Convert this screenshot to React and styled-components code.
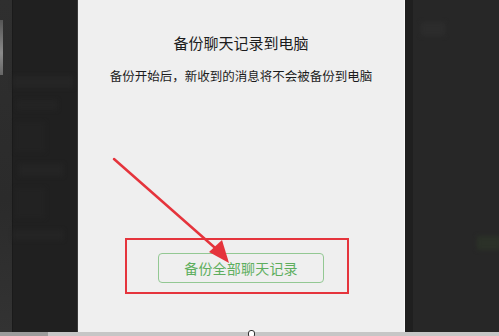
import React from "react";
import styled, { createGlobalStyle } from "styled-components";

const Global = createGlobalStyle`
  html, body { margin: 0; padding: 0; background: #262626; }
  body { font-family: "Noto Sans CJK SC", "Noto Sans", sans-serif; }
`;

const Screen = styled.div`
  position: relative;
  width: 499px;
  height: 336px;
  overflow: hidden;
  display: flex;
  flex-direction: column;
  background: #262626;
`;

const Main = styled.div`
  flex: 1;
  display: flex;
  min-height: 0;
`;

const LeftPanel = styled.div`
  flex: 0 0 78px;
  display: flex;
  background: #202020;
  border-right: 1px solid #3a3a3a;
  box-sizing: border-box;
`;

const LeftStrip = styled.div`
  width: 12px;
  background: linear-gradient(180deg, #2f2f2f 0%, #2b2b2b 60%, #333 100%);
  border-right: 1px solid #1a1a1a;
  position: relative;
`;

const StripGlint = styled.div`
  position: absolute;
  left: 0;
  top: 20px;
  width: 3px;
  height: 55px;
  background: linear-gradient(180deg, #555, #8a8a8a 60%, #666);
`;

const LeftList = styled.div`
  flex: 1;
  min-width: 0;
  display: flex;
  flex-direction: column;
  gap: 12px;
  padding: 76px 4px 0 0;
`;

const Blur = styled.div`
  flex-shrink: 0;
  height: ${(p) => p.$h || 10}px;
  width: ${(p) => p.$w || 50}px;
  margin-left: ${(p) => p.$ml || 0}px;
  background: ${(p) => p.$c || "#252525"};
  filter: blur(2px);
`;

const Dialog = styled.div`
  flex: 0 0 327px;
  background: #efefef;
  display: flex;
  flex-direction: column;
  align-items: center;
  padding-top: 33px;
  box-sizing: border-box;
  border-right: 1px solid #f8f8f8;
`;

const Title = styled.div`
  font-size: 15px;
  line-height: 20px;
  color: #1c1c1c;
`;

const Subtitle = styled.div`
  margin-top: 14px;
  font-size: 12.5px;
  line-height: 18px;
  color: #1c1c1c;
`;

const Highlight = styled.div`
  margin-top: 153px;
  align-self: flex-start;
  margin-left: 47px;
  width: 224px;
  height: 56px;
  box-sizing: border-box;
  border: 2px solid #e5343c;
  padding: 13px 0 0 31px;
`;

const GreenButton = styled.div`
  width: 166px;
  height: 30px;
  box-sizing: border-box;
  border: 1px solid #93c893;
  border-radius: 4px;
  display: flex;
  align-items: center;
  justify-content: center;
  color: #5eae5e;
  font-size: 14px;
  letter-spacing: 0.2px;
`;

const RightPanel = styled.div`
  flex: 1;
  min-width: 0;
  display: flex;
  background: #272727;
`;

const RightEdge = styled.div`
  width: 8px;
  background: #1f1f1f;
`;

const RightBody = styled.div`
  flex: 1;
  min-width: 0;
  display: flex;
  flex-direction: column;
  justify-content: space-between;
  padding: 22px 0 82px 8px;
`;

const BottomBar = styled.div`
  height: 4px;
  display: flex;
  background: #c6c6c6;
`;

const BottomLeft = styled.div`
  width: 48px;
  background: #9c9c9c;
`;

const Arrow = styled.svg`
  position: absolute;
  left: 0;
  top: 0;
  pointer-events: none;
`;

const Cursor = styled.div`
  position: absolute;
  left: 248px;
  top: 330px;
  width: 5px;
  height: 6px;
  border: 1px solid #333;
  border-radius: 3px;
  background: #fff;
`;

export default function App() {
  return (
    <Screen>
      <Global />
      <Main>
        <LeftPanel>
          <LeftStrip>
            <StripGlint />
          </LeftStrip>
          <LeftList>
            <Blur $w={60} $h={12} $c="#252525" />
            <Blur $w={40} $h={10} $c="#232323" $ml={4} />
            <Blur $w={30} $h={30} $c="#222" $ml={2} />
            <Blur $w={44} $h={12} $c="#242424" $ml={6} />
            <Blur $w={30} $h={30} $c="#222" $ml={2} />
            <Blur $w={50} $h={10} $c="#242424" />
          </LeftList>
        </LeftPanel>
        <Dialog>
          <Title>备份聊天记录到电脑</Title>
          <Subtitle>备份开始后，新收到的消息将不会被备份到电脑</Subtitle>
          <Highlight>
            <GreenButton>备份全部聊天记录</GreenButton>
          </Highlight>
        </Dialog>
        <RightPanel>
          <RightEdge />
          <RightBody>
            <Blur $w={24} $h={14} $c="#2c2c2c" />
            <Blur $w={24} $h={14} $c="#2b3128" $ml={56} />
          </RightBody>
        </RightPanel>
      </Main>
      <BottomBar>
        <BottomLeft />
      </BottomBar>
      <Arrow width="499" height="336" viewBox="0 0 499 336">
        <line x1="114" y1="159" x2="222" y2="254" stroke="#e5343c" strokeWidth="2.5" strokeLinecap="round" />
        <polygon points="229,263 209,252 222,240" fill="#e5343c" />
      </Arrow>
      <Cursor />
    </Screen>
  );
}
